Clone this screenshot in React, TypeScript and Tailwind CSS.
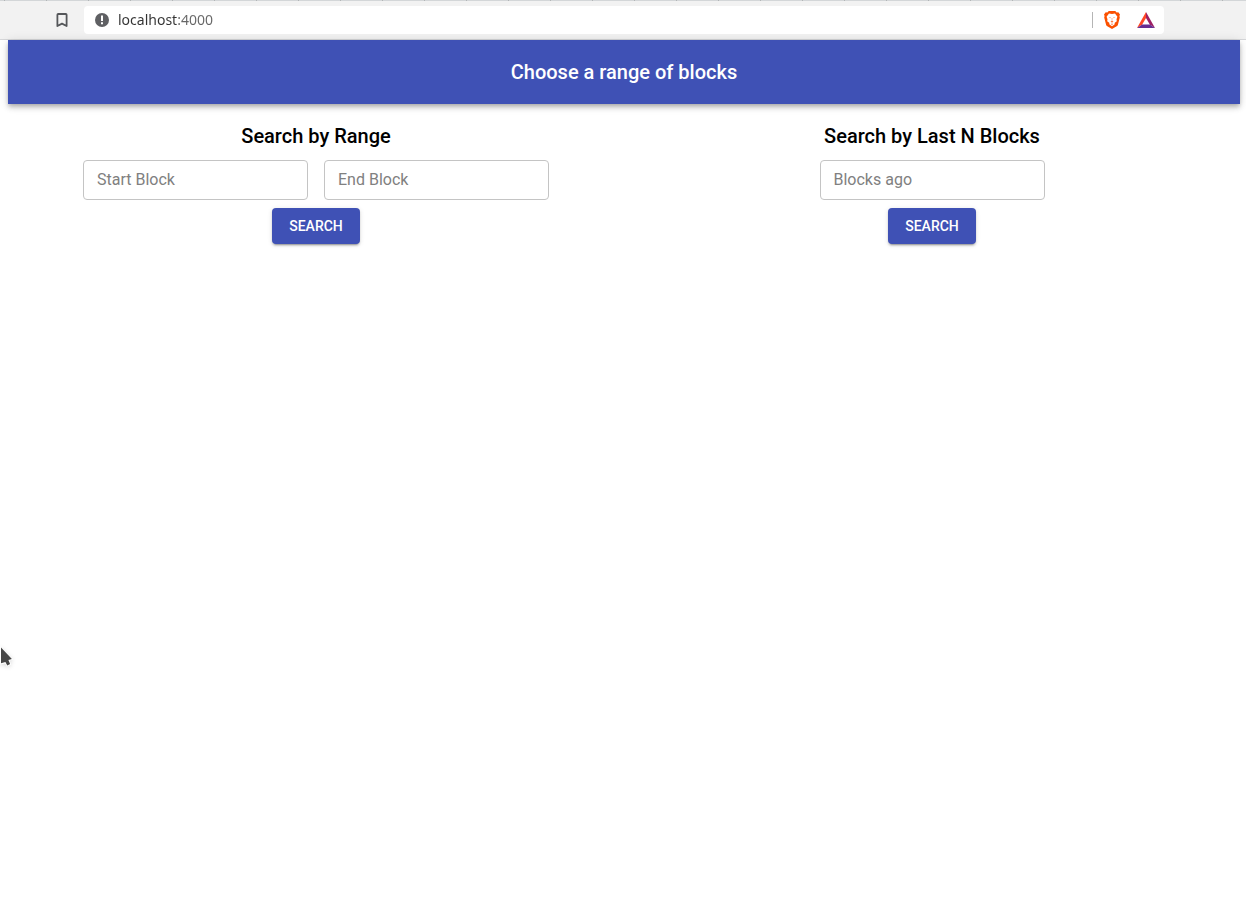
import { useState } from "react";

function BookmarkIcon() {
  return (
    <svg width="12" height="16" viewBox="0 0 12 16" fill="none" aria-hidden="true">
      <path d="M2.2 2h7.6a.8.8 0 0 1 .8.8V14L6 11.600 1.400 14V2.800A.8.8 0 0 1 2.200 2z" stroke="#55575a" strokeWidth="1.8" strokeLinejoin="round" />
    </svg>
  );
}

function InfoIcon() {
  return (
    <svg width="14" height="14" viewBox="0 0 14 14" aria-hidden="true">
      <circle cx="7" cy="7" r="7" fill="#5f6063" />
      <path d="M6 2.5h2v5.500H6zM6 9.200h2v2H6z" fill="#fff" />
    </svg>
  );
}

function LionIcon() {
  return (
    <svg width="16" height="18" viewBox="0 0 16 18" aria-hidden="true">
      <path d="M4.800 0h6.400l1.500 1.500 1.600-.2L16 3.600l-.6 1.500.4 1.400-1.900 7.200c-.2.7-.6 1.200-1.200 1.600L8 18l-4.700-2.700c-.6-.4-1-.9-1.200-1.600L.2 6.500l.4-1.400L0 3.600l1.700-2.300 1.600.2z" fill="#fb5000" />
      <path d="M5 2.600l3 .5 3-.5 2.400 3.200-.9 2.500.3 1.900-2 1.600-.3 1.600L8 15.200l-2.500-1.800-.3-1.600-2-1.600.3-1.900-.9-2.500z" fill="#fff" />
      <path d="M4.600 6l2.200.5-.4.700zM11.400 6l-2.200.5.4.700zM7.700 7h.6l-.1 2.800 1.300.7L8 11.700l-1.500-1.200 1.300-.7zM6.800 13L8 12.400l1.200.600L8 13.900z" fill="#fb7a40" />
    </svg>
  );
}

function TriangleIcon() {
  return (
    <svg width="18" height="16" viewBox="0 0 18 16" aria-hidden="true">
      <path d="M9 0L0 16l5.200-3.500L9 6z" fill="#ff4724" />
      <path d="M9 0v6l3.800 6.500L18 16z" fill="#9e1f63" />
      <path d="M0 16l5.200-3.500h7.600L18 16z" fill="#662d91" />
    </svg>
  );
}

function BrowserBar() {
  return (
    <div className="border-b border-[#d6d7d9] bg-[#f2f2f2]">
      <div className="h-px bg-[repeating-linear-gradient(to_right,#d3d6d8_0_4px,#b2b5b6_4px_5px,#d3d6d8_5px_42px)]" />
      <div className="flex h-[38px] items-center pr-[82px] pl-14">
        <button type="button" aria-label="Bookmark this page">
          <BookmarkIcon />
        </button>
        <div className="ml-4 flex h-7 flex-1 items-center rounded bg-white pr-[9px] pl-[11px]">
          <InfoIcon />
          <input
            aria-label="Address"
            defaultValue="localhost:4000"
            className="ml-[9px] min-w-0 flex-1 bg-[linear-gradient(to_right,#333_60px,#666_60px)] bg-clip-text font-['Noto_Sans',sans-serif] text-sm text-transparent caret-[#333] outline-none"
          />
          <div className="mr-[11px] h-4 w-px bg-[#b5b5b5]" />
          <button type="button" aria-label="Shields">
            <LionIcon />
          </button>
          <button type="button" aria-label="Rewards" className="ml-[17px]">
            <TriangleIcon />
          </button>
        </div>
      </div>
    </div>
  );
}

function SearchForm({ title, fields }: { title: string; fields: string[] }) {
  const [values, setValues] = useState<Record<string, string>>({});
  return (
    <form className="flex flex-col items-center gap-2" onSubmit={(e) => e.preventDefault()}>
      <h2 className="text-xl leading-8 font-medium text-black">{title}</h2>
      <div className="flex flex-wrap justify-center gap-x-4 gap-y-2">
        {fields.map((field) => (
          <input
            key={field}
            aria-label={field}
            placeholder={field}
            value={values[field] ?? ""}
            onChange={(e) => setValues({ ...values, [field]: e.target.value })}
            className="h-10 w-[225px] rounded border border-[#c4c4c4] px-[13px] pb-0.5 text-base text-black/87 outline-none placeholder:text-[#808080] focus:border-[#3f51b5]"
          />
        ))}
      </div>
      <button
        type="submit"
        className="h-9 w-[88px] rounded bg-[#3f51b5] text-sm font-medium text-white uppercase shadow-[0_3px_1px_-2px_rgba(0,0,0,0.2),0_2px_2px_0_rgba(0,0,0,0.14),0_1px_5px_0_rgba(0,0,0,0.12)]"
      >
        Search
      </button>
    </form>
  );
}

function Pointer() {
  return (
    <svg className="pointer-events-none absolute top-[645px] left-0 drop-shadow-sm" width="14" height="23" viewBox="0 0 14 23" aria-hidden="true">
      <path d="M0 1l13.200 13.400-3.500 1.200 1.500 3.800-4.200 2.200-1.800-3L0 19.500z" fill="#fff" />
      <path d="M1 2.500l10.900 11.500-3.500 1 1.700 4-2.800 1.500-1.900-3.500L1 18.300z" fill="#464646" />
    </svg>
  );
}

export default function App() {
  return (
    <div className="relative min-h-screen bg-white font-[Roboto,sans-serif]">
      <BrowserBar />
      <div className="pr-1.5 pl-2">
        <header className="flex h-16 items-center justify-center bg-[#3f51b5] shadow-[0_2px_4px_-1px_rgba(0,0,0,0.2),0_4px_5px_0_rgba(0,0,0,0.14),0_1px_10px_0_rgba(0,0,0,0.12)]">
          <h1 className="text-xl leading-8 font-medium text-white">Choose a range of blocks</h1>
        </header>
        <main className="grid grid-cols-2 pt-4">
          <SearchForm title="Search by Range" fields={["Start Block", "End Block"]} />
          <SearchForm title="Search by Last N Blocks" fields={["Blocks ago"]} />
        </main>
      </div>
      <Pointer />
    </div>
  );
}
